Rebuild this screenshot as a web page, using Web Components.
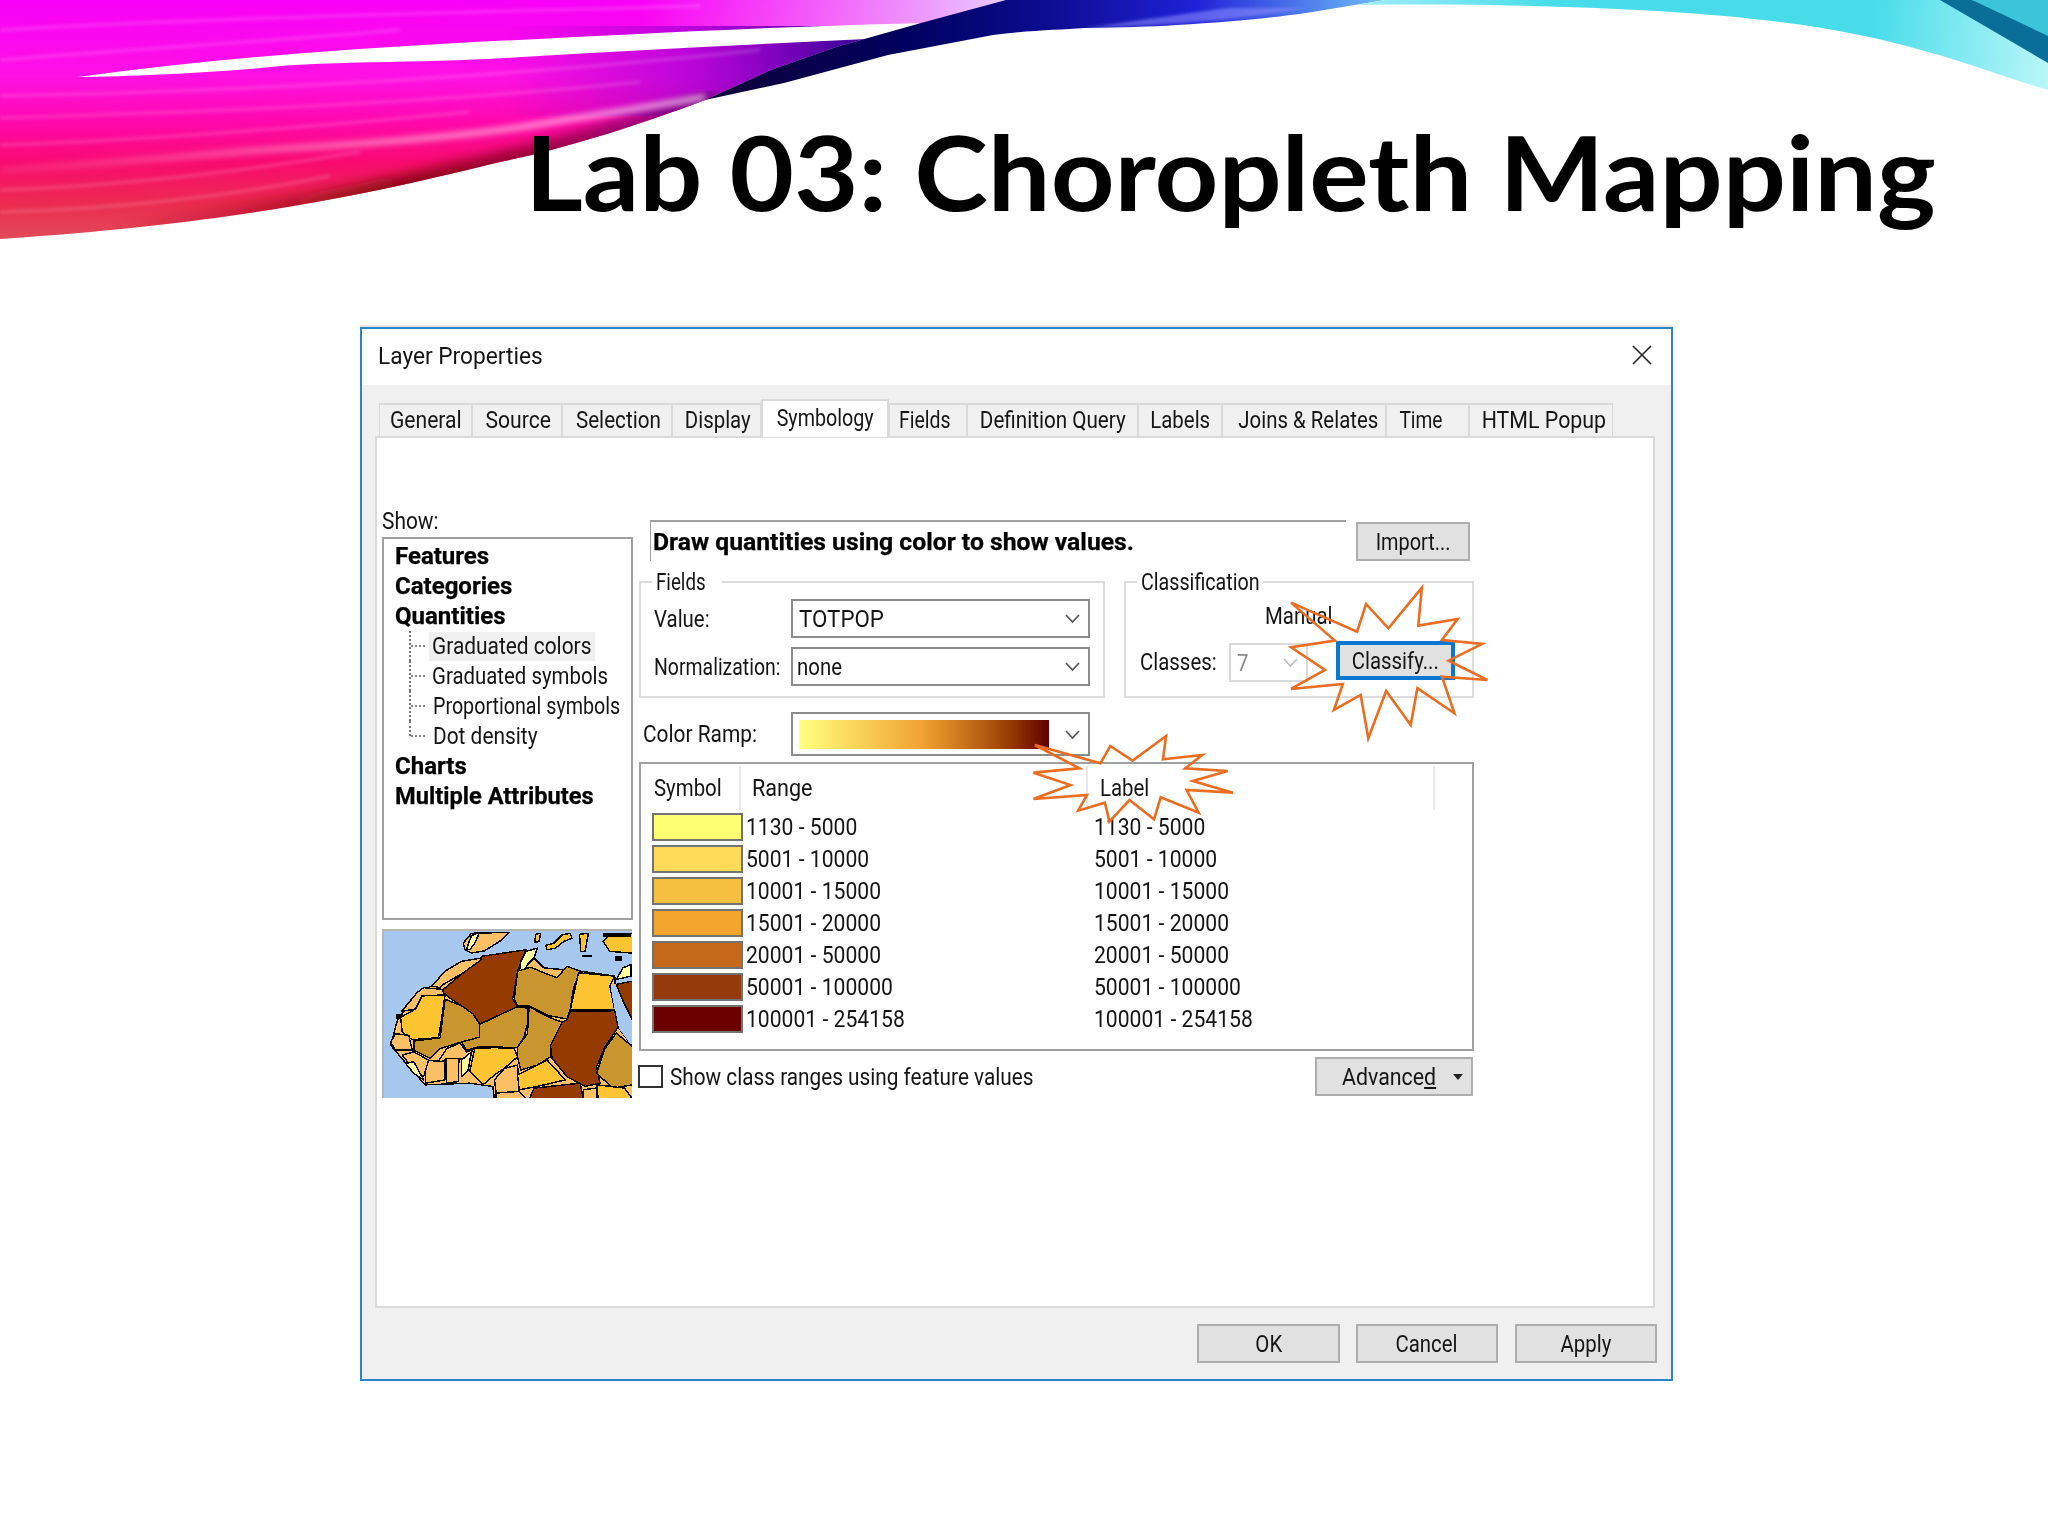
<!DOCTYPE html>
<html lang="en"><head><meta charset="utf-8"><title>Lab 03: Choropleth Mapping</title>
<style>html,body{margin:0;padding:0;background:#fff}</style></head>
<body>
<slide-deck>
  <slide-title>Lab 03: Choropleth Mapping</slide-title>
  <layer-dialog>
    <dlg-titlebar><t-x style="--sx:.945">Layer Properties</t-x></dlg-titlebar>
    <dlg-body>
      <dlg-tabs>
        <dlg-tab style="width:93px"><t-x style="--sx:.88">General</t-x></dlg-tab>
        <dlg-tab style="width:90px;padding-left:2px"><t-x style="--sx:.88">Source</t-x></dlg-tab>
        <dlg-tab style="width:110px;padding-left:2px"><t-x style="--sx:.86">Selection</t-x></dlg-tab>
        <dlg-tab style="width:89px;padding-left:2px"><t-x>Display</t-x></dlg-tab>
        <dlg-tab active style="width:128px"><t-x style="--sx:.82">Symbology</t-x></dlg-tab>
        <dlg-tab style="width:78px;padding-right:6px"><t-x style="--sx:.81">Fields</t-x></dlg-tab>
        <dlg-tab style="width:171px"><t-x style="--sx:.86">Definition Query</t-x></dlg-tab>
        <dlg-tab style="width:84px"><t-x>Labels</t-x></dlg-tab>
        <dlg-tab style="width:164px;padding-left:8px"><t-x>Joins &amp; Relates</t-x></dlg-tab>
        <dlg-tab style="width:83px;padding-right:13px"><t-x style="--sx:.8">Time</t-x></dlg-tab>
        <dlg-tab style="width:144px;padding-left:5px"><t-x style="--sx:.89">HTML Popup</t-x></dlg-tab>
      </dlg-tabs>
      <dlg-panel>
        <show-column>
          <show-label><t-x style="--sx:.87">Show:</t-x></show-label>
          <tree-list>
            <tree-head><t-x>Features</t-x></tree-head>
            <tree-head><t-x>Categories</t-x></tree-head>
            <tree-head><t-x>Quantities</t-x></tree-head>
            <tree-child selected><t-x style="--sx:.87">Graduated colors</t-x></tree-child>
            <tree-child><t-x style="--sx:.85">Graduated symbols</t-x></tree-child>
            <tree-child><t-x style="--sx:.82;margin-left:1px">Proportional symbols</t-x></tree-child>
            <tree-child last><t-x style="--sx:.87;margin-left:1px">Dot density</t-x></tree-child>
            <tree-head><t-x>Charts</t-x></tree-head>
            <tree-head><t-x style="--sx:.985">Multiple Attributes</t-x></tree-head>
          </tree-list>
          <map-preview></map-preview>
        </show-column>
        <sym-column>
          <desc-row>
            <desc-box><t-x style="--sx:1.03;font-weight:700">Draw quantities using color to show values.</t-x></desc-box>
            <ui-button style="width:114px;margin-top:2px"><t-x style="--sx:.83">Import...</t-x></ui-button>
          </desc-row>
          <group-row>
            <ui-group style="width:466px;--lw:62px"><t-x slot="legend" style="--sx:.78">Fields</t-x>
              <field-grid>
                <t-x>Value:</t-x><ui-combo><t-x style="--sx:.93">TOTPOP</t-x></ui-combo>
                <t-x style="--sx:.81">Normalization:</t-x><ui-combo style="padding-left:4px"><t-x>none</t-x></ui-combo>
              </field-grid>
            </ui-group>
            <ui-group style="width:350px;--lw:118px"><t-x slot="legend" style="--sx:.82">Classification</t-x>
              <class-box>
                <manual-line><t-x>Manual</t-x></manual-line>
                <class-row>
                  <class-label><t-x>Classes:</t-x></class-label>
                  <ui-combo style="width:79px;margin-top:2px;--bc:#d9d9d9;--cc:#bdbdbd;color:#8a8a8a"><t-x>7</t-x></ui-combo>
                  <ui-button style="width:119px;margin-left:28px;border:4px solid #0a78d2"><t-x>Classify...</t-x></ui-button>
                </class-row>
              </class-box>
            </ui-group>
          </group-row>
          <ramp-row>
            <t-x style="--sx:.87">Color Ramp:</t-x>
            <ui-combo style="height:44px"><color-ramp></color-ramp></ui-combo>
          </ramp-row>
          <legend-table>
            <legend-head><span><t-x>Symbol</t-x></span><span><t-x style="--sx:.9">Range</t-x></span><span><t-x>Label</t-x></span></legend-head>
            <legend-rows>
              <legend-row style="--c:#ffff73"><t-x>1130 - 5000</t-x><t-x>1130 - 5000</t-x></legend-row>
              <legend-row style="--c:#ffdb59"><t-x>5001 - 10000</t-x><t-x>5001 - 10000</t-x></legend-row>
              <legend-row style="--c:#f7bf40"><t-x>10001 - 15000</t-x><t-x>10001 - 15000</t-x></legend-row>
              <legend-row style="--c:#f2a52c"><t-x>15001 - 20000</t-x><t-x>15001 - 20000</t-x></legend-row>
              <legend-row style="--c:#c4691a"><t-x>20001 - 50000</t-x><t-x>20001 - 50000</t-x></legend-row>
              <legend-row style="--c:#953a0a"><t-x>50001 - 100000</t-x><t-x>50001 - 100000</t-x></legend-row>
              <legend-row style="--c:#6b0000"><t-x>100001 - 254158</t-x><t-x>100001 - 254158</t-x></legend-row>
            </legend-rows>
          </legend-table>
          <option-row>
            <ui-check></ui-check>
            <t-x style="margin-left:7px;--sx:.865">Show class ranges using feature values</t-x>
            <ui-button style="width:158px;margin-left:auto;margin-right:1px;justify-content:flex-start;padding:0 8px 0 25px;--ox:left">
              <t-x style="--sx:.89">Advance<u>d</u></t-x>
              <span style="margin-left:auto;width:0;height:0;border:5px solid transparent;border-top:6px solid #222;border-bottom:0"></span>
            </ui-button>
          </option-row>
        </sym-column>
      </dlg-panel>
      <dlg-footer>
        <ui-button style="width:143px"><t-x>OK</t-x></ui-button>
        <ui-button style="width:142px"><t-x>Cancel</t-x></ui-button>
        <ui-button style="width:142px;margin-left:1px"><t-x>Apply</t-x></ui-button>
      </dlg-footer>
    </dlg-body>
  </layer-dialog>
</slide-deck>
<script>
const def=(name,html)=>{customElements.define(name,class extends HTMLElement{
  constructor(){super();this.attachShadow({mode:'open'}).innerHTML=html}
})};
const host=(css,inner='<slot></slot>')=>`<style>:host{${css}}</style>${inner}`;
const edge='M0 0H1010L921 23 836 47 771 70 705 100 C640 125 560 150 500 162 C400 186 260 222 0 239Z';

const swoosh=`<svg viewBox="0 0 2048 240" width="2048" height="240" style="display:block">
<defs>
<linearGradient id="pk" x1="0" y1="0" x2="0" y2="1">
 <stop offset="0" stop-color="#f800f8"/><stop offset=".32" stop-color="#ff10e4"/><stop offset=".5" stop-color="#ff08b0"/>
 <stop offset=".68" stop-color="#f80a70"/><stop offset=".85" stop-color="#ec2a50"/><stop offset="1" stop-color="#e04a58"/></linearGradient>
<linearGradient id="pu" gradientUnits="userSpaceOnUse" x1="500" y1="0" x2="840" y2="0">
 <stop offset="0" stop-color="#a000c8" stop-opacity="0"/><stop offset=".55" stop-color="#9000d0" stop-opacity=".6"/><stop offset="1" stop-color="#4800a0" stop-opacity="1"/></linearGradient>
<linearGradient id="li" gradientUnits="userSpaceOnUse" x1="640" y1="0" x2="1000" y2="0">
 <stop offset="0" stop-color="#f4b0ff" stop-opacity="0"/><stop offset="1" stop-color="#e8c8ff" stop-opacity="1"/></linearGradient>
<linearGradient id="nv" gradientUnits="userSpaceOnUse" x1="705" y1="0" x2="1385" y2="0">
 <stop offset="0" stop-color="#100038"/><stop offset=".3" stop-color="#000060"/><stop offset=".5" stop-color="#0c0c90"/><stop offset=".72" stop-color="#2020d8"/><stop offset="1" stop-color="#70c0fa"/></linearGradient>
<linearGradient id="cy" gradientUnits="userSpaceOnUse" x1="1340" y1="0" x2="2048" y2="60">
 <stop offset="0" stop-color="#a8f0f8"/><stop offset=".3" stop-color="#48dcea"/><stop offset=".75" stop-color="#48dcea"/><stop offset="1" stop-color="#b8f6f8"/></linearGradient>
<linearGradient id="rd" gradientUnits="userSpaceOnUse" x1="120" y1="0" x2="640" y2="0">
 <stop offset="0" stop-color="#b01020" stop-opacity="0"/><stop offset=".5" stop-color="#8a0808" stop-opacity=".9"/><stop offset=".8" stop-color="#780020" stop-opacity=".7"/><stop offset="1" stop-color="#500050" stop-opacity=".55"/></linearGradient>
<linearGradient id="st" gradientUnits="userSpaceOnUse" x1="0" y1="0" x2="705" y2="0">
 <stop offset="0" stop-color="#ffc0d0" stop-opacity=".15"/><stop offset=".6" stop-color="#ffd8e8" stop-opacity=".7"/><stop offset="1" stop-color="#ffe0f0" stop-opacity=".85"/></linearGradient>
<clipPath id="cl"><path d="${edge}"/></clipPath>
<filter id="b1"><feGaussianBlur stdDeviation="1.5"/></filter>
<filter id="b2"><feGaussianBlur stdDeviation="3"/></filter>
<filter id="b6"><feGaussianBlur stdDeviation="6"/></filter>
</defs>
<path d="${edge}" fill="url(#pk)"/>
<g clip-path="url(#cl)">
 <rect x="500" y="26" width="520" height="90" fill="url(#pu)"/>
 <rect x="640" y="0" width="380" height="26" fill="url(#li)"/>
 <path d="M0 30C200 18 420 14 700 6M0 60C120 50 260 42 400 30M0 96C200 92 480 80 760 50M0 118C200 112 420 104 640 82M0 145C150 140 300 128 470 112M0 190C120 186 240 172 360 152M0 212C120 208 220 198 330 176" fill="none" stroke="#fff" stroke-opacity=".13" stroke-width="4" filter="url(#b1)"/>
 <path d="M720 106C640 132 560 156 500 170C400 194 260 230 0 247" fill="none" stroke="url(#rd)" stroke-width="36" filter="url(#b6)"/>
 <path d="M705 97C620 112 560 120 522 127C430 140 340 145 261 150C170 158 80 165 0 170" fill="none" stroke="url(#st)" stroke-width="5" filter="url(#b2)"/>
</g>
<path d="M78 77C200 60 330 50 457 43C600 36 780 26 927 23L888 38C760 44 640 50 522 57C420 64 330 60 261 68C190 74 130 76 78 77Z" fill="#fff"/>
<path d="M1006 0 921 23 836 47 771 70 705 100 784 83 888 55 993 35C1030 30 1060 30 1084 28C1120 27 1150 27 1176 25C1230 22 1270 18 1306 13L1385 0Z" fill="url(#nv)"/>
<path d="M1084 28C1150 26 1230 22 1306 8L1230 8C1180 14 1130 22 1084 28Z" fill="#9090ff" fill-opacity=".55" filter="url(#b1)"/>
<path d="M1385 0H2048V90C1980 70 1900 34 1763 20C1660 8 1500 3 1358 5Z" fill="url(#cy)"/>
<path d="M1940 0 2048 63V20L1972 0Z" fill="#0b6e98"/>
<path d="M1972 0 2048 36V0Z" fill="#3cc4da"/>
</svg>`;

def('slide-deck',host('display:block;position:relative;width:2048px;height:1536px;overflow:hidden;background:#fff',
 `<div style="position:absolute;left:0;top:0">${swoosh}</div>
 <slot></slot>
 <svg style="position:absolute;left:0;top:0;z-index:3;pointer-events:none" width="2048" height="1536" viewBox="0 0 2048 1536" fill="none" stroke="#ec6c20" stroke-width="2.6" stroke-linejoin="miter">
  <g transform="translate(1000 320) scale(.4464 .3333)"><polygon vector-effect="non-scaling-stroke" points="652,848 800,935 820,852 870,925 945,803 937,917 1025,897 990,960 1080,972 1005,1022 1092,1080 990,1070 1018,1180 935,1105 920,1215 865,1113 825,1255 808,1125 748,1170 768,1092 652,1107 728,1050 652,982 750,962"/></g>
  <g transform="translate(1000 720) scale(.4464 .3333)"><polygon vector-effect="non-scaling-stroke" points="78,75 225,130 247,78 297,122 372,48 365,118 453,105 415,145 510,153 432,183 522,218 418,210 445,278 360,232 345,298 290,240 245,305 235,248 175,272 195,225 75,237 158,195 75,158 178,145"/></g>
 </svg>`));

def('slide-title',`<style>:host{display:block;position:relative;z-index:1;box-sizing:border-box;height:327px;padding:119px 0 0 525px;font:700 104px/104px Lato,"Liberation Sans",sans-serif;color:#000;white-space:nowrap}
span{display:inline-block;transform:scaleX(1.07);transform-origin:left center}</style><span><slot></slot></span>`);

def('t-x',host(`display:inline-block;white-space:nowrap;line-height:1;transform:scaleX(var(--sx,.85));transform-origin:var(--ox,left) center`));

def('layer-dialog',host(`display:flex;flex-direction:column;box-sizing:border-box;position:relative;z-index:2;width:1313px;height:1054px;margin-left:360px;border:2px solid #2b86c9;box-shadow:0 -2px 0 #e6e6e6;background:#fff;font:24px Roboto,"Liberation Sans",sans-serif;color:#151515;filter:blur(.55px)`));

def('dlg-titlebar',host(`display:flex;align-items:center;justify-content:space-between;height:56px;padding:0 19px 0 16px;flex:none;background:#fff`,
 `<span style="display:flex;margin-top:-2px"><slot></slot></span><svg width="20" height="20" viewBox="0 0 20 20" stroke="#222" stroke-width="1.6" style="margin-top:-5px"><path d="M1 1 19 19M19 1 1 19"/></svg>`));

def('dlg-body',host(`display:flex;flex-direction:column;flex:1;box-sizing:border-box;background:#f0f0f0;padding:18px 16px 0 13px`));
def('dlg-tabs',host(`display:flex;align-items:flex-end;height:33px;padding-left:4px;flex:none;--ox:center`));
def('dlg-tab',`<style>:host{display:flex;align-items:center;justify-content:center;box-sizing:border-box;height:33px;padding-bottom:2px;background:#f0f0f0;border:2px solid #dadada;border-bottom:0;border-right-width:1px;border-left-width:1px}
:host([active]){position:relative;z-index:1;height:38px;margin-bottom:-1px;background:#fff;border-width:2px;border-bottom:0}</style><slot></slot>`);
def('dlg-panel',host(`display:grid;grid-template-columns:251px 835px;column-gap:6px;align-items:start;box-sizing:border-box;height:872px;flex:none;background:#fff;border:2px solid #dadada;padding:72px 0 0 5px`));
def('dlg-footer',host(`display:flex;justify-content:flex-end;gap:16px;padding-top:16px;margin-right:-2px;--ox:center`));

def('show-column',host(`display:flex;flex-direction:column`));
def('show-label',host(`display:flex;align-items:center;box-sizing:border-box;height:27px;padding-bottom:5px`));
def('tree-list',host(`display:block;box-sizing:border-box;height:383px;border:2px solid #a0a0a0;padding-top:2px;margin-bottom:9px`));
def('tree-head',host(`display:flex;align-items:center;height:30px;padding-left:11px;font-weight:700;--sx:1;color:#000;-webkit-text-stroke:.25px #000`));
def('tree-child',`<style>:host{display:flex;align-items:center;height:30px;padding-left:25px;--sx:.84}
.c{position:relative;box-sizing:border-box;width:17px;height:30px;border-left:2px dotted #777;flex:none}
.c::after{content:"";position:absolute;left:0;top:14px;width:14px;border-top:2px dotted #888}
:host([last]) .c{height:15px;align-self:flex-start}
.t{display:flex;align-items:center;box-sizing:border-box;width:166px;height:29px;margin-left:3px;padding-left:3px}
:host([selected]) .t{background:#f0f0f0}</style><span class="c"></span><span class="t"><slot></slot></span>`);

const ink='#000';
def('map-preview',host(`display:block;box-sizing:border-box;width:250px;height:169px;background:#a6c8ee;border-top:2px solid #b5b5b5;border-left:2px solid #b5b5b5`,
 `<svg viewBox="37 28 748 507" width="248" height="167" style="display:block" stroke="${ink}" stroke-width="4.5" stroke-linejoin="round" shape-rendering="crispEdges">
 <polygon fill="#fbc065" points="180,195 275,120 465,85 520,140 630,150 735,165 745,320 790,380 790,540 370,540 365,500 295,490 160,495 110,440 55,375 75,300 135,215"/>
 <polygon fill="#fbc065" points="280,85 275,65 300,35 415,32 385,60 340,88 300,95"/>
 <polygon fill="#ffff9e" points="285,82 300,42 325,32 310,65 295,85"/>
 <polygon fill="#fbc065" points="180,195 220,150 270,120 330,110 325,125 275,155 215,190 205,200"/>
 <polygon fill="#fbc065" points="88,272 135,215 155,200 210,205 222,225 150,228 130,265"/>
 <polygon fill="#953a00" points="215,205 275,155 330,115 330,105 465,85 440,150 430,210 425,235 440,258 380,285 325,310 305,280 270,255 235,232 215,215"/>
 <polygon fill="#ffff9e" points="445,155 450,120 465,90 500,80 490,110 470,130 460,150"/>
 <polygon fill="#fdc431" points="85,290 130,265 150,225 220,222 210,290 200,352 120,358 90,335"/>
 <polygon fill="#c9952f" points="205,352 220,235 270,255 305,280 325,310 325,350 270,365 205,385 175,415 125,390 125,362"/>
 <polygon fill="#c9952f" points="325,312 380,285 440,258 470,262 470,310 460,350 440,382 360,380 320,380 285,390 270,365 325,350"/>
 <polygon fill="#c9952f" points="430,235 440,150 480,138 520,155 560,170 590,135 630,150 610,200 600,265 590,295 535,285 475,255 440,255"/>
 <polygon fill="#c9952f" points="475,258 535,290 575,305 570,340 540,375 540,410 500,435 450,450 440,410 440,380 470,340"/>
 <polygon fill="#fdc431" points="600,268 625,155 735,165 720,195 735,268"/>
 <polygon fill="#a6c8ee" stroke="none" points="722,195 738,190 760,260 785,320 785,375 745,320 735,268"/>
 <polygon fill="#953a00" points="600,272 735,270 745,320 705,380 680,440 690,490 645,500 590,470 545,415 540,375 575,305 590,298"/>
 <polygon fill="#c9952f" points="740,338 790,380 790,495 730,505 680,460 705,385"/>
 <polygon fill="#953a00" points="740,190 790,180 790,300 760,240"/>
 <polygon fill="#fdc431" points="700,60 720,40 790,35 790,95 720,90"/>
 <polygon fill="#fdc431" points="310,385 370,382 430,385 440,410 400,445 370,465 335,495 295,455"/>
 <polygon fill="#fbc065" points="195,430 225,385 265,368 285,395 305,388 290,410 262,418 222,418"/>
 <polygon fill="#fbc065" points="160,420 220,425 220,480 160,490"/>
 <polygon fill="#fbc065" points="222,415 262,415 260,485 225,490"/>
 <polygon fill="#ffff9e" points="270,420 300,395 290,450 270,470"/>
 <polygon fill="#fbc065" points="90,405 125,395 170,420 155,470 110,430"/>
 <polygon fill="#ffff9e" points="100,430 125,425 155,480 125,460"/>
 <polygon fill="#fbc065" points="55,365 70,340 110,345 120,390 70,390"/>
 <polygon fill="#fbc065" points="370,480 400,445 440,435 445,515 375,520"/>
 <polygon fill="#fdc431" points="440,465 530,420 585,480 500,500 445,510"/>
 <polygon fill="#953a00" points="475,540 490,505 630,490 640,540"/>
 <polygon fill="#fbc065" points="640,510 680,505 680,540 640,540"/>
 <polygon fill="#fdc431" points="680,495 765,505 790,540 685,540"/>
 <polygon fill="#fbc065" points="375,520 445,515 470,540 375,540"/>
 <polygon fill="#ffff9e" points="740,175 760,140 785,130 785,165"/>
 <g fill="#fdc431"><polygon points="495,38 510,35 505,60 492,62"/><polygon points="525,72 550,65 575,40 600,35 605,50 580,60 555,80 530,85"/><polygon points="628,38 655,35 645,90 632,90"/></g>
 <g fill="#000" stroke="none"><rect x="637" y="100" width="30" height="8"/><rect x="735" y="105" width="22" height="14"/><rect x="70" y="280" width="15" height="15"/><rect x="700" y="35" width="85" height="10"/></g>
 </svg>`));

def('sym-column',host(`display:flex;flex-direction:column;padding-top:10px`));
def('desc-row',host(`display:flex;gap:10px;height:41px;margin-left:11px;--ox:center`));
def('desc-box',host(`display:flex;align-items:center;box-sizing:border-box;width:696px;height:41px;border-top:2px solid #a0a0a0;border-left:1px solid #a0a0a0;padding-left:2px;--ox:left;color:#000;-webkit-text-stroke:.25px #000`));
def('ui-button',host(`display:flex;align-items:center;justify-content:center;box-sizing:border-box;height:39px;background:#e1e1e1;border:2px solid #adadad;flex:none;--ox:center`));
def('group-row',host(`display:flex;gap:19px;margin-top:20px`));
def('ui-group',`<style>:host{display:block;position:relative;box-sizing:border-box;height:117px;border:2px solid #dcdcdc;flex:none}
.l{position:absolute;left:11px;top:-14px;box-sizing:content-box;width:var(--lw);padding:0 4px;height:26px;display:flex;align-items:center;background:#fff}</style>
<span class="l"><slot name="legend"></slot></span><slot></slot>`);
def('field-grid',host(`display:grid;grid-template-columns:137px 299px;grid-auto-rows:39px;row-gap:9px;align-items:center;padding:16px 0 0 13px`));
def('ui-combo',`<style>:host{display:flex;align-items:center;box-sizing:border-box;height:39px;background:#fff;border:2px solid var(--bc,#8c8c8c);padding-left:6px}
svg{margin-left:auto;margin-right:8px;flex:none}</style><slot></slot><svg width="15" height="9" viewBox="0 0 15 9" fill="none" stroke="var(--cc,#555)" stroke-width="1.7"><path d="M1 1 7.5 8 14 1"/></svg>`);
def('class-box',host(`display:block;padding:20px 0 0 14px`));
def('manual-line',host(`display:flex;align-items:center;height:26px;margin-left:125px`));
def('class-row',host(`display:flex;align-items:flex-start;margin-top:12px`));
def('class-label',host(`display:flex;align-items:center;width:89px;height:41px;flex:none`));
def('ramp-row',host(`display:grid;grid-template-columns:148px 299px;align-items:center;margin-top:14px;padding-left:4px`));
def('color-ramp',host(`display:block;width:250px;height:29px;background:linear-gradient(90deg,#ffff80 0%,#f9d058 25%,#f0a030 50%,#c06818 70%,#963800 85%,#600000 100%)`));
def('legend-table',host(`display:flex;flex-direction:column;box-sizing:border-box;height:289px;margin-top:6px;border:2px solid #a0a0a0`));
def('legend-head',`<style>:host{display:grid;grid-template-columns:98px 347px 349px;height:46px;flex:none}
::slotted(span){display:flex;align-items:center;box-sizing:border-box;padding-left:12px;margin-top:2px}
::slotted(span:nth-child(1)){padding-left:13px}
::slotted(span:nth-child(2)){border-left:2px solid #e8e8e8;padding-left:11px}
::slotted(span:nth-child(3)){border-left:2px solid #e8e8e8;border-right:2px solid #ededed}</style><slot></slot>`);
def('legend-rows',host(`display:flex;flex-direction:column;gap:4px;margin-top:3px;--sx:.88`));
def('legend-row',`<style>:host{display:grid;grid-template-columns:94px 348px 1fr;align-items:center;height:28px;padding-left:11px}
.s{box-sizing:border-box;width:91px;height:28px;background:var(--c);border:2px solid #737373}</style><span class="s"></span><slot></slot>`);
def('option-row',host(`display:flex;align-items:center;height:39px;margin-top:6px;--ox:left`));
def('ui-check',host(`display:block;box-sizing:border-box;width:25px;height:23px;border:2px solid #333;background:#fff;margin-left:-1px;flex:none`));
</script>
</body></html>
